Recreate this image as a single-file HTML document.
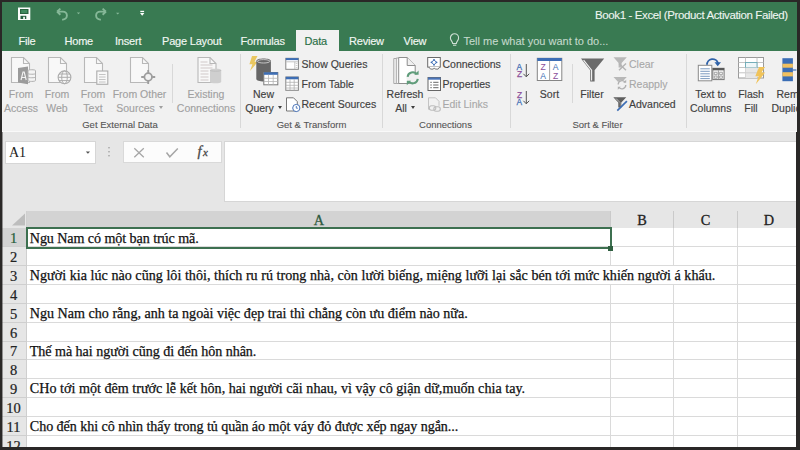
<!DOCTYPE html>
<html><head><meta charset="utf-8">
<style>
*{margin:0;padding:0;box-sizing:border-box}
html,body{width:800px;height:450px;overflow:hidden;background:#2a2827}
body{position:relative;font-family:"Liberation Sans",sans-serif}
.a{position:absolute;white-space:nowrap}
#title{left:2px;top:2px;width:795px;height:48.5px;background:#397a52}
.tab{position:absolute;top:33.5px;font-size:11px;color:#f2f7f3;line-height:14px;white-space:nowrap;letter-spacing:-0.2px;-webkit-text-stroke:0.15px currentColor}
#ribbon{left:2px;top:50.5px;width:795px;height:81px;background:#f1f1f1;border-bottom:1px solid #f9f9f9}
.bl{position:absolute;font-size:10.5px;color:#a0a0a0;-webkit-text-stroke:0.12px currentColor;line-height:14.3px;text-align:center;white-space:nowrap;width:80px}
.sl{position:absolute;font-size:10.5px;color:#a8a8a8;-webkit-text-stroke:0.12px currentColor;line-height:14px;white-space:nowrap}
.dk{color:#3f3f3f;-webkit-text-stroke:0.15px #3f3f3f}
.grp{position:absolute;top:119px;font-size:9.5px;color:#555;-webkit-text-stroke:0.1px #555;line-height:12px;text-align:center;width:120px;white-space:nowrap}
.sep{position:absolute;width:1px;background:#d8d8d8}
#fbar{left:2px;top:132px;width:794px;height:79px;background:#e6e6e6}
#grid{left:2px;top:211px;width:794px;height:237px;background:#fff}
.cell{position:absolute;left:29.8px;font-family:"Liberation Serif",serif;font-size:14.1px;color:#111;-webkit-text-stroke:0.25px #111;line-height:19px;white-space:nowrap}
.hl{position:absolute;left:2px;width:794px;background:#dadada;height:1px}
.rn{position:absolute;left:1.5px;width:24px;text-align:center;font-family:"Liberation Serif",serif;font-size:14.5px;color:#222;-webkit-text-stroke:0.2px #222;line-height:19px}
.ch{position:absolute;top:212px;font-family:"Liberation Serif",serif;font-size:14.3px;color:#222;-webkit-text-stroke:0.3px #222;line-height:16px;text-align:center}
</style></head><body>
<div class="a" id="title"></div>
<div class="a" style="left:595px;top:8px;font-size:11.5px;letter-spacing:-0.38px;color:#eef5f0;line-height:14px;-webkit-text-stroke:0.1px #eef5f0">Book1 - Excel (Product Activation Failed)</div>
<!-- QAT -->
<svg class="a" style="left:0;top:0" width="160" height="30" viewBox="0 0 160 30">
 <rect x="18" y="7.5" width="12.3" height="12.5" fill="#fbfdfb"/>
 <rect x="20" y="9" width="8.5" height="5" fill="#28633f"/>
 <rect x="21.2" y="10" width="6" height="3" fill="#3f8a5e"/>
 <rect x="20.5" y="15.8" width="5.8" height="3.2" fill="#25603f"/>
 <rect x="23.2" y="16.8" width="1.7" height="2.2" fill="#fbfdfb"/>
 <path d="M57 11.6l3.4-3M57 11.6l3.4 3.1M57.3 11.6h5.6a4 4 0 0 1 0 8h-0.8" stroke="#86b898" stroke-width="1.9" fill="none"/>
 <path d="M76.8 12.6h3.4l-1.7 1.7z" fill="#86b898"/>
 <path d="M106 11.6l-3.4-3M106 11.6l-3.4 3.1M105.7 11.6h-5.6a4 4 0 0 0 0 8h0.8" stroke="#86b898" stroke-width="1.9" fill="none"/>
 <path d="M116 12.8h3.4l-1.7 1.7z" fill="#86b898"/>
 <rect x="140.3" y="10.8" width="3.8" height="1.3" fill="#fff"/>
 <path d="M140 13h4.4l-2.2 2.7z" fill="#fff"/>
</svg>
<!-- tabs -->
<div class="tab" style="left:18.5px">File</div>
<div class="tab" style="left:64.5px">Home</div>
<div class="tab" style="left:115px">Insert</div>
<div class="tab" style="left:162px">Page Layout</div>
<div class="tab" style="left:240.5px">Formulas</div>
<div class="a" style="left:296px;top:30px;width:43px;height:22px;background:#f1f1f1"></div>
<div class="tab" style="left:304.5px;color:#2a6f47">Data</div>
<div class="tab" style="left:349px">Review</div>
<div class="tab" style="left:403.5px">View</div>
<svg class="a" style="left:448px;top:33px" width="14" height="14" viewBox="0 0 14 14">
 <path d="M4.7 10.5c0-2-2.3-3-2.3-5.6a4.1 4.1 0 0 1 8.2 0c0 2.6-2.3 3.6-2.3 5.6z" fill="none" stroke="#cfe0d5" stroke-width="1.1"/>
 <path d="M5 12.2h3.3" stroke="#cfe0d5" stroke-width="1.1"/>
</svg>
<div class="tab" style="left:463.5px;color:#c4d9cb;letter-spacing:0;-webkit-text-stroke:0.1px #c4d9cb">Tell me what you want to do...</div>

<div class="a" id="ribbon"></div>
<!-- large button labels (center x via left=cx-40) -->
<div class="bl" style="left:-19px;top:87.2px">From<br>Access</div>
<div class="bl" style="left:17px;top:87.2px">From<br>Web</div>
<div class="bl" style="left:53px;top:87.2px">From<br>Text</div>
<div class="bl" style="left:99.5px;top:87.2px">From Other<br>Sources <i style="display:inline-block;width:0;height:0;border-left:2.5px solid transparent;border-right:2.5px solid transparent;border-top:3px solid currentColor;vertical-align:3.5px;margin-left:1px"></i></div>
<div class="bl" style="left:166px;top:87.2px">Existing<br>Connections</div>
<div class="grp" style="left:60px">Get External Data</div>
<div class="sep" style="left:171.5px;top:64px;height:39px"></div>
<div class="sep" style="left:240px;top:54px;height:74px"></div>

<div class="bl dk" style="left:223.5px;top:87.2px">New<br>Query <i style="display:inline-block;width:0;height:0;border-left:2.5px solid transparent;border-right:2.5px solid transparent;border-top:3px solid currentColor;vertical-align:3.5px;margin-left:1px"></i></div>
<div class="sl dk" style="left:301.5px;top:57.4px">Show Queries</div>
<div class="sl dk" style="left:301.5px;top:77.2px">From Table</div>
<div class="sl dk" style="left:301.5px;top:97px">Recent Sources</div>
<div class="grp" style="left:251.5px">Get &amp; Transform</div>
<div class="sep" style="left:382px;top:54px;height:74px"></div>

<div class="bl dk" style="left:365px;top:87.2px">Refresh<br>All <i style="display:inline-block;width:0;height:0;border-left:2.5px solid transparent;border-right:2.5px solid transparent;border-top:3px solid currentColor;vertical-align:3.5px;margin-left:1px"></i></div>
<div class="sl dk" style="left:442.5px;top:57.4px">Connections</div>
<div class="sl dk" style="left:442.5px;top:77.2px">Properties</div>
<div class="sl" style="left:442.5px;top:97px">Edit Links</div>
<div class="grp" style="left:385.5px">Connections</div>
<div class="sep" style="left:510px;top:54px;height:74px"></div>

<div class="bl dk" style="left:509.5px;top:87.2px">Sort</div>
<div class="sep" style="left:571.5px;top:64px;height:39px"></div>
<div class="bl dk" style="left:552px;top:87.2px">Filter</div>
<div class="sl" style="left:629px;top:57.4px">Clear</div>
<div class="sl" style="left:629px;top:77.2px">Reapply</div>
<div class="sl dk" style="left:629px;top:97px">Advanced</div>
<div class="grp" style="left:537.5px">Sort &amp; Filter</div>
<div class="sep" style="left:685.5px;top:54px;height:74px"></div>

<div class="bl dk" style="left:670.7px;top:87.2px">Text to<br>Columns</div>
<div class="bl dk" style="left:711px;top:87.2px">Flash<br>Fill</div>
<div class="bl dk" style="left:756.5px;top:87.2px;text-align:left;width:60px;padding-left:20px">Remove<br><span style="margin-left:-5px">Duplicates</span></div>

<svg class="a" style="left:0;top:50px" width="800" height="90" viewBox="0 50 800 90">
 <!-- From Access -->
 <path d="M11.5 57.5h12l6 6v19h-18z" fill="#f8f8f8" stroke="#b8b8b8" stroke-width="1.1"/>
 <path d="M23.5 57.5v6h6" fill="none" stroke="#b8b8b8" stroke-width="1.1"/>
 <path d="M18 68l10-1.6v17.8l-10-1.6z" fill="#9b9b9b"/>
 <path d="M21 80l2-8h1.2l2 8M21.8 77.5h3.5" stroke="#f4f4f4" stroke-width="1.1" fill="none"/>
 <path d="M28 70.5c0-1 7.5-1 7.5 0v10c0 1.2-7.5 1.2-7.5 0z" fill="#f4f4f4" stroke="#b0b0b0" stroke-width="1"/>
 <path d="M28 73.5c0 1 7.5 1 7.5 0M28 77c0 1 7.5 1 7.5 0" fill="none" stroke="#b0b0b0" stroke-width="1"/>
 <!-- From Web -->
 <path d="M48.5 57.5h12l6 6v19h-18z" fill="#f8f8f8" stroke="#b8b8b8" stroke-width="1.1"/>
 <path d="M60.5 57.5v6h6" fill="none" stroke="#b8b8b8" stroke-width="1.1"/>
 <circle cx="64.5" cy="77.3" r="6.4" fill="#f8f8f8" stroke="#acacac" stroke-width="1.1"/>
 <ellipse cx="64.5" cy="77.3" rx="2.8" ry="6.4" fill="none" stroke="#acacac" stroke-width="1"/>
 <path d="M58.1 77.3h12.8M59 74h11M59 80.6h11" stroke="#acacac" stroke-width="1"/>
 <!-- From Text -->
 <path d="M84.5 57.5h12l6 6v19h-18z" fill="#f8f8f8" stroke="#b8b8b8" stroke-width="1.1"/>
 <path d="M96.5 57.5v6h6" fill="none" stroke="#b8b8b8" stroke-width="1.1"/>
 <rect x="96.8" y="71" width="11" height="13.3" fill="#f8f8f8" stroke="#acacac" stroke-width="1.1"/>
 <path d="M99 74.5h6.6M99 77h6.6M99 79.5h6.6M99 82h6.6" stroke="#bdbdbd" stroke-width="0.9"/>
 <!-- From Other Sources -->
 <path d="M130.5 57.5h12l6 6v19h-18z" fill="#f8f8f8" stroke="#b8b8b8" stroke-width="1.1"/>
 <path d="M142.5 57.5v6h6" fill="none" stroke="#b8b8b8" stroke-width="1.1"/>
 <circle cx="148.2" cy="77" r="3.8" fill="#f1f1f1" stroke="#9d9d9d" stroke-width="1.8"/>
 <path d="M148.2 70v3M148.2 81v3M141.2 77h3M152.2 77h3" stroke="#9d9d9d" stroke-width="1.8"/>
 <!-- Existing Connections -->
 <path d="M198 57.5h12l6 6v19h-18z" fill="#f8f8f8" stroke="#b8b8b8" stroke-width="1.1"/>
 <path d="M210 57.5v6h6" fill="none" stroke="#b8b8b8" stroke-width="1.1"/>
 <path d="M200.5 62h7M200.5 65h12M200.5 68h12M200.5 71h8M200.5 74h8M200.5 77h8M200.5 80h8" stroke="#d0c8c8" stroke-width="1"/>
 <path d="M210 70c0-1.6 11.2-1.6 11.2 0v12c0 1.8-11.2 1.8-11.2 0z" fill="#cfcfcf"/>
 <path d="M210 70c0 1.6 11.2 1.6 11.2 0" fill="none" stroke="#bdbdbd" stroke-width="1"/>

 <!-- New Query -->
 <path d="M252 56h5.5l-3 5.8h3.3l-7.8 9.3 2.4-6.8h-3z" fill="#e9c760"/>
 <path d="M256.3 61c0-3.3 14.6-3.3 14.6 0v18c0 3.3-14.6 3.3-14.6 0z" fill="#666"/>
 <ellipse cx="263.6" cy="61.3" rx="6.3" ry="1.7" fill="none" stroke="#cfcfcf" stroke-width="0.9"/>
 <rect x="263.8" y="72.5" width="14" height="12.3" fill="#fff" stroke="#7a7a7a" stroke-width="1"/>
 <rect x="263.8" y="72.3" width="14" height="2.5" fill="#3d6eb5"/>
 <path d="M263.8 78.3h14M263.8 81.5h14M268.5 74.8v10M273.2 74.8v10" stroke="#b5b5b5" stroke-width="0.8"/>
 <!-- Show Queries -->
 <rect x="285.8" y="58.3" width="12.6" height="11" fill="#fff" stroke="#858585" stroke-width="1"/>
 <rect x="285.8" y="58.1" width="12.6" height="2" fill="#3d6eb5"/>
 <path d="M286.3 61.8h11.6M294.8 61.8v7.3" stroke="#b5b5b5" stroke-width="0.8"/>
 <path d="M295.8 63.5h1.6M295.8 65.5h1.6M295.8 67.5h1.6" stroke="#bbb" stroke-width="0.7"/>
 <!-- From Table -->
 <rect x="285.8" y="77" width="12.6" height="13.3" fill="#fff" stroke="#858585" stroke-width="1"/>
 <rect x="285.8" y="76.8" width="12.6" height="2.5" fill="#3d6eb5"/>
 <path d="M285.8 82.3h12.6M285.8 85.3h12.6M285.8 88h12.6M290 79.3v11M294.2 79.3v11" stroke="#b0b0b0" stroke-width="0.8"/>
 <!-- Recent Sources -->
 <path d="M286.5 97.8h7l3.8 3.8v9.4h-10.8z" fill="#fff" stroke="#777" stroke-width="1"/>
 <circle cx="296.3" cy="108" r="3.6" fill="#fff" stroke="#4a74b8" stroke-width="1"/>
 <path d="M296.3 106v2.2h1.6" stroke="#4a74b8" stroke-width="0.9" fill="none"/>

 <!-- Refresh All -->
 <path d="M393.8 58.5h5v25h-5z" fill="#f6f6f6" stroke="#a8a8a8" stroke-width="1"/>
 <path d="M396.3 58h5v25.5h-5z" fill="#f6f6f6" stroke="#a8a8a8" stroke-width="1"/>
 <path d="M398.7 57.5h8.5l8 8v18h-16.5z" fill="#fff" stroke="#8f8f8f" stroke-width="1"/>
 <path d="M407.2 57.5v8h8" fill="#f0f0f0" stroke="#8f8f8f" stroke-width="1"/>
 <circle cx="412.7" cy="77.8" r="6.3" fill="#f1f1f1"/>
 <path d="M407.6 76.8a5.2 5.2 0 0 1 9.2-2.6M417.8 78.8a5.2 5.2 0 0 1-9.2 2.6" fill="none" stroke="#5f9c7a" stroke-width="2"/>
 <path d="M414.2 74.8h4.4v-4.4zM411.2 80.8h-4.4v4.4z" fill="#5f9c7a"/>
 <!-- Connections small -->
 <rect x="427.7" y="57.5" width="12.6" height="9.6" fill="#fff" stroke="#6a6a6a" stroke-width="1"/>
 <path d="M429 67.1l1.5 2h2.8l1-1.2 1 1.2h2.8l1.5-2" fill="#fff" stroke="#6a6a6a" stroke-width="0.9"/>
 <path d="M434 59.8l2.5 2.5-2.5 2.5-2.5-2.5z" fill="none" stroke="#3d6eb5" stroke-width="1"/>
 <circle cx="434" cy="59.8" r="0.9" fill="#3d6eb5"/><circle cx="436.5" cy="62.3" r="0.9" fill="#3d6eb5"/><circle cx="434" cy="64.8" r="0.9" fill="#3d6eb5"/><circle cx="431.5" cy="62.3" r="0.9" fill="#3d6eb5"/>
 <!-- Properties -->
 <rect x="428" y="77.5" width="12.5" height="13" fill="#fff" stroke="#666" stroke-width="1"/>
 <rect x="428" y="77.5" width="12.5" height="2.2" fill="#4a74b8"/>
 <path d="M430.3 82.3h1.5M430.3 85h1.5M430.3 87.7h1.5M433.2 82.3h5.3M433.2 85h5.3M433.2 87.7h5.3" stroke="#666" stroke-width="1"/>
 <!-- Edit Links disabled -->
 <path d="M428.5 97.8h7l3.5 3.5v4.5M428.5 97.8v11.5h1.5" fill="none" stroke="#c4c4c4" stroke-width="1"/>
 <rect x="429.3" y="105.8" width="6.5" height="4.4" rx="2.2" fill="none" stroke="#bdbdbd" stroke-width="1.1"/>
 <rect x="433.8" y="106.8" width="6.5" height="4.4" rx="2.2" fill="none" stroke="#bdbdbd" stroke-width="1.1"/>
 <!-- Sort AZ -->
 <text x="516.6" y="69.6" font-size="8.4" font-family="Liberation Sans" fill="#3d6eb5" stroke="#3d6eb5" stroke-width="0.25">A</text>
 <text x="516.9" y="77" font-size="8.4" font-family="Liberation Sans" fill="#8b4f9a" stroke="#8b4f9a" stroke-width="0.25">Z</text>
 <path d="M526.3 64v12.8M523.4 73.8l2.9 3 2.9-3" stroke="#555" stroke-width="1" fill="none"/>
 <!-- Sort ZA -->
 <text x="516.9" y="97.6" font-size="8.4" font-family="Liberation Sans" fill="#8b4f9a" stroke="#8b4f9a" stroke-width="0.25">Z</text>
 <text x="516.6" y="104.5" font-size="8.4" font-family="Liberation Sans" fill="#3d6eb5" stroke="#3d6eb5" stroke-width="0.25">A</text>
 <path d="M526.3 91v12.8M523.4 100.8l2.9 3 2.9-3" stroke="#555" stroke-width="1" fill="none"/>
 <!-- Sort big -->
 <rect x="537.3" y="58.3" width="24.5" height="22.2" fill="#fff" stroke="#858585" stroke-width="1"/>
 <rect x="537.3" y="58" width="24.5" height="3" fill="#3d6eb5"/>
 <path d="M549.6 61v19.5" stroke="#9a9a9a" stroke-width="0.9"/>
 <text x="540.6" y="70.2" font-size="8.6" font-family="Liberation Sans" fill="#8b4f9a">Z</text>
 <text x="540.3" y="78.6" font-size="8.6" font-family="Liberation Sans" fill="#3d6eb5">A</text>
 <text x="552.8" y="70.2" font-size="8.6" font-family="Liberation Sans" fill="#3d6eb5">A</text>
 <text x="553.1" y="78.6" font-size="8.6" font-family="Liberation Sans" fill="#8b4f9a">Z</text>
 <!-- Filter big -->
 <path d="M581 58.6h23.2l-9.6 11.6v11.2h-4.4v-11.2z" fill="#6b6b6b"/>
 <path d="M583.6 60.2l8 9.9v10.4" fill="none" stroke="#f4f4f4" stroke-width="1.1"/>
 <!-- Clear -->
 <path d="M613.5 57.3h13.3l-5.2 5.6v4.5h-3v-4.5z" fill="#b8b8b8"/>
 <path d="M619 63.6l7 6.6M626 63.6l-7 6.6" stroke="#b3b3b3" stroke-width="1.4"/>
 <!-- Reapply -->
 <path d="M613.5 77h13.3l-5.2 5.6v4.5h-3v-4.5z" fill="#b8b8b8"/>
 <circle cx="622" cy="84.8" r="4.6" fill="#f1f1f1"/>
 <path d="M618.2 84.5a3.8 3.8 0 0 1 6.8-2.3M625.8 85.1a3.8 3.8 0 0 1-6.8 2.3" stroke="#b0b0b0" stroke-width="1.3" fill="none"/>
 <path d="M623.2 82.8h3v-3zM620.8 86.8h-3v3z" fill="#b0b0b0"/>
 <!-- Advanced -->
 <path d="M613.3 97.2h13l-5 5.4v5h-3v-5z" fill="#5e5e5e"/>
 <path d="M614.8 98.4h2.2l3.6 4v4h-0.8v-3.7z" fill="#9a9a9a"/>
 <path d="M617.3 110.6l9.6-9.4" stroke="#3d6eb5" stroke-width="1.7"/>
 <!-- Text to Columns -->
 <rect x="698.3" y="65.3" width="13.5" height="15.5" fill="#fff" stroke="#8a8a8a" stroke-width="1"/>
 <path d="M700.3 68.8h9.5M700.3 71.3h9.5M700.3 73.8h9.5M700.3 76.3h9.5M700.3 78.6h9.5" stroke="#6d8fb8" stroke-width="0.9"/>
 <rect x="712.8" y="68.3" width="11.3" height="11.3" fill="#f6f6f6" stroke="#777" stroke-width="1"/>
 <rect x="712.8" y="68" width="11.3" height="2.3" fill="#5a5a5a"/>
 <path d="M718.4 70.3v9.3" stroke="#888" stroke-width="0.8"/>
 <path d="M714.3 72.3h2.8v2.3h-2.8zM719.6 72.3h2.8v2.3h-2.8zM714.3 76h2.8v2.3h-2.8zM719.6 76h2.8v2.3h-2.8z" fill="none" stroke="#888" stroke-width="0.7"/>
 <path d="M707 64.8a5.6 5.6 0 0 1 11-1.6" stroke="#2f62a8" stroke-width="1.8" fill="none"/>
 <path d="M714.5 62.3h6.5l-3.3 4z" fill="#2f62a8"/>
 <!-- Flash Fill -->
 <rect x="738.5" y="57.5" width="25" height="20.5" fill="#fff" stroke="#9a9a9a" stroke-width="1"/>
 <path d="M738.5 62.5h25M738.5 67.5h25M738.5 72.8h25M745.5 57.5v20.5M757 57.5v20.5" stroke="#bdbdbd" stroke-width="0.9"/>
 <rect x="745.5" y="62.5" width="11.5" height="5" fill="#eef6f8" stroke="#6aa9b5" stroke-width="0.9"/>
 <path d="M745.5 67.5h11.5v10.5h-11.5z" fill="#e6e6e6"/>
 <path d="M745.5 72.8h11.5" stroke="#c9c9c9" stroke-width="0.8"/>
 <path d="M759 67h6l-3.5 5.5h3.6l-9.3 11.8 2.8-8h-3.3z" fill="#f0c35a"/>
 <!-- Remove Duplicates -->
 <rect x="782.4" y="58.2" width="10.5" height="23" fill="#3a6db5"/>
 <rect x="782.4" y="63.7" width="10.5" height="4" fill="#f0c060"/>
 <rect x="782.4" y="72.2" width="10.5" height="4.2" fill="#f0c060"/>
 <path d="M792.9 70h3.5" stroke="#3a6db5" stroke-width="1.2"/>
</svg>


<div class="a" id="fbar"></div>
<div class="a" style="left:4.5px;top:140.5px;width:91.5px;height:23.5px;background:#fff;border:1px solid #d6d6d6"></div>
<div class="a" style="left:9px;top:145px;font-family:'Liberation Serif',serif;font-size:14px;line-height:16px;color:#222">A1</div>
<div class="a" style="left:122.5px;top:140.5px;width:99px;height:22.5px;border:1px solid #d9d9d9;background:#fcfcfc"></div>
<svg class="a" style="left:0;top:130px" width="230" height="40" viewBox="0 130 230 40">
 <path d="M85.8 151.5h4.2l-2.1 2.3z" fill="#555"/>
 <circle cx="109" cy="147.8" r="0.8" fill="#9a9a9a"/>
 <circle cx="109" cy="151.8" r="0.8" fill="#9a9a9a"/>
 <circle cx="109" cy="155.8" r="0.8" fill="#9a9a9a"/>
 <path d="M134.3 148.2l9.5 9M143.8 148.2l-9.5 9" stroke="#a6a6a6" stroke-width="1.3"/>
 <path d="M166.5 152.5l3.3 4.3 8-8.3" stroke="#a6a6a6" stroke-width="1.5" fill="none"/>
 <text x="197.5" y="156.3" font-family="Liberation Serif" font-style="italic" font-size="14.5" fill="#4a4a4a" stroke="#4a4a4a" stroke-width="0.3">f</text>
 <text x="203" y="156.3" font-family="Liberation Serif" font-style="italic" font-size="11" fill="#4a4a4a" stroke="#4a4a4a" stroke-width="0.3">x</text>
</svg>
<div class="a" style="left:224px;top:140.5px;width:572px;height:61.5px;background:#fff;border:1px solid #d6d6d6;border-right:none"></div>

<div class="a" id="grid"></div>
<div class="a" style="left:2px;top:210.6px;width:794px;height:17.80000000000001px;background:#e6e6e6"></div>
<div class="a" style="left:27px;top:210.6px;width:583.5px;height:17.80000000000001px;background:#d3d3d3"></div>
<div class="a" style="left:27px;top:226.9px;width:583.5px;height:1.5px;background:#3f7d57"></div>
<div class="a" style="left:2px;top:228.4px;width:25px;height:218.6px;background:#e6e6e6"></div>
<div class="a" style="left:2px;top:228.4px;width:25px;height:18.85px;background:#d3d3d3"></div>
<div class="a" style="left:610.0px;top:210.6px;width:1px;height:17.80000000000001px;background:#cacaca"></div>
<div class="a" style="left:673.25px;top:210.6px;width:1px;height:17.80000000000001px;background:#cacaca"></div>
<div class="a" style="left:737.0px;top:210.6px;width:1px;height:17.80000000000001px;background:#cacaca"></div>
<svg class="a" style="left:2px;top:210.6px" width="25" height="17" viewBox="0 0 25 17"><path d="M10 14.5L23 2.5V14.5z" fill="#bdbdbd"/></svg>
<div class="a" style="left:2px;top:246.25px;width:25px;height:1px;background:#cfcfcf"></div>
<div class="hl" style="left:27px;width:769px;top:246.25px"></div>
<div class="a" style="left:2px;top:265.10px;width:25px;height:1px;background:#cfcfcf"></div>
<div class="hl" style="left:27px;width:769px;top:265.10px"></div>
<div class="a" style="left:2px;top:283.95px;width:25px;height:1px;background:#cfcfcf"></div>
<div class="hl" style="left:27px;width:769px;top:283.95px"></div>
<div class="a" style="left:2px;top:302.80px;width:25px;height:1px;background:#cfcfcf"></div>
<div class="hl" style="left:27px;width:769px;top:302.80px"></div>
<div class="a" style="left:2px;top:321.65px;width:25px;height:1px;background:#cfcfcf"></div>
<div class="hl" style="left:27px;width:769px;top:321.65px"></div>
<div class="a" style="left:2px;top:340.50px;width:25px;height:1px;background:#cfcfcf"></div>
<div class="hl" style="left:27px;width:769px;top:340.50px"></div>
<div class="a" style="left:2px;top:359.35px;width:25px;height:1px;background:#cfcfcf"></div>
<div class="hl" style="left:27px;width:769px;top:359.35px"></div>
<div class="a" style="left:2px;top:378.20px;width:25px;height:1px;background:#cfcfcf"></div>
<div class="hl" style="left:27px;width:769px;top:378.20px"></div>
<div class="a" style="left:2px;top:397.05px;width:25px;height:1px;background:#cfcfcf"></div>
<div class="hl" style="left:27px;width:769px;top:397.05px"></div>
<div class="a" style="left:2px;top:415.90px;width:25px;height:1px;background:#cfcfcf"></div>
<div class="hl" style="left:27px;width:769px;top:415.90px"></div>
<div class="a" style="left:2px;top:434.75px;width:25px;height:1px;background:#cfcfcf"></div>
<div class="hl" style="left:27px;width:769px;top:434.75px"></div>
<div class="a" style="left:2px;top:453.60px;width:25px;height:1px;background:#cfcfcf"></div>
<div class="hl" style="left:27px;width:769px;top:453.60px"></div>
<div class="a" style="left:610.0px;top:228.4px;width:1px;height:37.70000000000002px;background:#dadada"></div>
<div class="a" style="left:610.0px;top:283.95px;width:1px;height:163.05px;background:#dadada"></div>
<div class="a" style="left:673.25px;top:228.4px;width:1px;height:37.70000000000002px;background:#dadada"></div>
<div class="a" style="left:673.25px;top:283.95px;width:1px;height:163.05px;background:#dadada"></div>
<div class="a" style="left:737.0px;top:228.4px;width:1px;height:218.6px;background:#dadada"></div>
<div class="a" style="left:26px;top:210.6px;width:1px;height:236.4px;background:#cfcfcf"></div>
<div class="rn" style="top:229.25px;color:#245c3a;-webkit-text-stroke:0.2px #245c3a">1</div>
<div class="cell" style="top:228.65px;letter-spacing:-0.08px">Ngu Nam có một bạn trúc mã.</div>
<div class="rn" style="top:248.10px">2</div>
<div class="rn" style="top:266.95px">3</div>
<div class="cell" style="top:266.35px;letter-spacing:0.025px">Người kia lúc nào cũng lôi thôi, thích ru rú trong nhà, còn lười biếng, miệng lưỡi lại sắc bén tới mức khiến người á khẩu.</div>
<div class="rn" style="top:285.80px">4</div>
<div class="rn" style="top:304.65px">5</div>
<div class="cell" style="top:304.05px;letter-spacing:0px">Ngu Nam cho rằng, anh ta ngoài việc đẹp trai thì chẳng còn ưu điểm nào nữa.</div>
<div class="rn" style="top:323.50px">6</div>
<div class="rn" style="top:342.35px">7</div>
<div class="cell" style="top:341.75px;letter-spacing:-0.05px">Thế mà hai người cũng đi đến hôn nhân.</div>
<div class="rn" style="top:361.20px">8</div>
<div class="rn" style="top:380.05px">9</div>
<div class="cell" style="top:379.45px;letter-spacing:0.019px">CHo tới một đêm trước lễ kết hôn, hai người cãi nhau, vì vậy cô giận dữ,muốn chia tay.</div>
<div class="rn" style="top:398.90px">10</div>
<div class="rn" style="top:417.75px">11</div>
<div class="cell" style="top:417.15px;letter-spacing:-0.058px">Cho đến khi cô nhìn thấy trong tủ quần áo một váy đỏ được xếp ngay ngắn...</div>
<div class="rn" style="top:436.60px">12</div>
<div class="ch" style="left:298.8px;width:40px;color:#2d5a3e;-webkit-text-stroke:0.3px #2d5a3e">A</div>
<div class="ch" style="left:622.125px;width:40px">B</div>
<div class="ch" style="left:685.625px;width:40px">C</div>
<div class="ch" style="left:749px;width:40px">D</div>
<div class="a" style="left:26px;top:227px;width:586px;height:22px;border:2px solid #3d7050"></div>
<div class="a" style="left:608px;top:246px;width:5px;height:5px;background:#2f5f40"></div>
<div class="a" style="left:797px;top:0;width:3px;height:132px;background:#2a2827"></div>
<div class="a" style="left:796px;top:132px;width:4px;height:318px;background:#2a2827"></div>
<div class="a" style="left:0;top:447px;width:800px;height:3px;background:#2a2827"></div>
<div class="a" style="left:2px;top:132px;width:1px;height:315px;background:rgba(42,40,39,0.45)"></div>
</body></html>
